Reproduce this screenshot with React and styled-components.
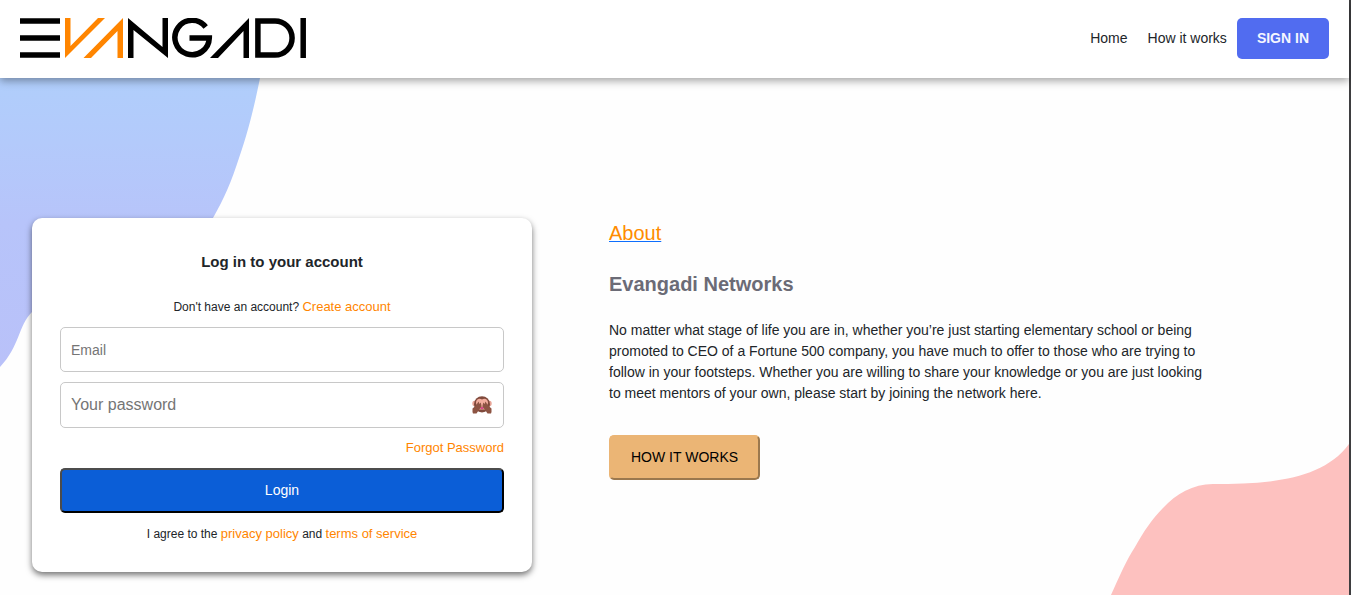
import React from "react";
import styled, { createGlobalStyle } from "styled-components";

const GlobalStyle = createGlobalStyle`
  *, *::before, *::after { box-sizing: border-box; }
  body {
    margin: 0;
    background: #fefefe;
    color: #212529;
    font-family: "Liberation Sans", Arial, sans-serif;
    font-size: 14px;
    line-height: 21px;
  }
  h1, h2, p { margin: 0; }
`;

const Page = styled.div`
  display: flex;
  flex-direction: column;
  min-height: 100vh;
  border-right: 2px solid #3e3e40;
`;

const Header = styled.header`
  display: flex;
  align-items: center;
  justify-content: space-between;
  min-height: 78px;
  padding: 0 20px 2px;
  background: #fff;
  box-shadow: 0 3px 8px rgba(0, 0, 0, 0.35);
  z-index: 1;
`;

const LogoLink = styled.a`
  display: block;
  height: 40px;
`;

const Nav = styled.nav`
  display: flex;
  align-items: center;
`;

const NavLink = styled.a`
  padding: 0 10px;
  color: #212529;
  text-decoration: none;
`;

const SignIn = styled.button`
  padding: 10px 20px;
  border: 0;
  border-radius: 5px;
  background: #516cf0;
  color: #f4f6ff;
  font: bold 14px/21px "Liberation Sans", Arial, sans-serif;
`;

const Main = styled.main`
  display: grid;
  flex: 1;
  grid-template: 1fr / 1fr;
  & > * { grid-area: 1 / 1; }
`;

const BlueShape = styled.svg`
  justify-self: start;
  align-self: start;
`;

const PinkShape = styled.svg`
  justify-self: end;
  align-self: end;
`;

const Content = styled.div`
  display: flex;
  flex-wrap: wrap;
  align-items: flex-start;
  gap: 32px 77px;
  padding: 140px 32px 23px;
  z-index: 0;
`;

const Card = styled.form`
  display: flex;
  flex-direction: column;
  flex: 0 1 500px;
  padding: 28px;
  border-radius: 10px;
  background: #fff;
  box-shadow: 0 3px 6px rgba(0, 0, 0, 0.55);
`;

const CardTitle = styled.h1`
  margin-bottom: 19px;
  font-size: 15px;
  line-height: 32px;
  text-align: center;
`;

const Note = styled.p`
  font-size: 12px;
  line-height: 20px;
  text-align: center;
`;

const OrangeLink = styled.a`
  color: #ff8500;
  font-size: 13px;
  line-height: 20px;
  text-decoration: none;
`;

const ForgotLink = styled(OrangeLink)`
  align-self: flex-end;
  margin-top: 10px;
`;

const Field = styled.div`
  display: flex;
  align-items: center;
  height: ${(p) => p.$height}px;
  margin-top: 10px;
  padding: 0 11px 0 10px;
  border: 1px solid #c8c8c8;
  border-radius: 5px;
  background: #fff;
`;

const Input = styled.input`
  flex: 1;
  min-width: 0;
  padding: 0;
  border: 0;
  outline: 0;
  background: transparent;
  font-family: inherit;
  font-size: ${(p) => p.$size}px;
  &::placeholder { color: #757575; opacity: 1; }
`;

const RevealButton = styled.button`
  display: flex;
  padding: 0;
  border: 0;
  background: none;
`;

const LoginButton = styled.button`
  height: 45px;
  margin: 10px 0 11px;
  border: 2px solid;
  border-color: #4c4c4c #000 #000 #4c4c4c;
  border-radius: 5px;
  background: #0b5ed7;
  color: #fff;
  font: 14px/21px "Liberation Sans", Arial, sans-serif;
`;

const About = styled.section`
  display: flex;
  flex-direction: column;
  align-items: flex-start;
  flex: 0 1 600px;
`;

const AboutLink = styled.a`
  color: #ff8c00;
  font-size: 20px;
  line-height: 30px;
  text-decoration: underline 1px #0d6efd;
`;

const AboutTitle = styled.h2`
  margin: 24px 0;
  color: #6b6b76;
  font-size: 20px;
  line-height: 24px;
`;

const HowButton = styled.button`
  margin-top: 31px;
  padding: 10px 20px;
  border: 2px solid;
  border-color: #ebb575 #9b784e #9b784e #ebb575;
  border-radius: 5px;
  background: #ebb575;
  color: #000;
  font: 14px/21px "Liberation Sans", Arial, sans-serif;
`;

const Logo = () => (
  <svg width="287" height="40" viewBox="0 0 287 40" role="img" aria-label="Evangadi">
    <path d="M0 2.900H40M0 20H40M0 37.100H40" stroke="#000" strokeWidth="5.500" />
    <polygon points="45,0 50.500,0 50.500,28 78,0 85,0 45,40" fill="#ff8500" />
    <polygon points="103,0 103,40 97.500,40 97.500,13 71,40 63.500,40" fill="#ff8500" />
    <polygon points="108,0 142.500,29 142.500,0 148,0 148,40 113.500,12 113.500,40 108,40" />
    <path d="M185.700 9A17.200 17.200 0 1 0 189.300 20H169.500" fill="none" stroke="#000" strokeWidth="5.500" />
    <polygon points="229,0 229,40 223.500,40 223.500,13 198,40 190,40" />
    <path d="M237.900 2.900H255A17.100 17.100 0 0 1 255 37.100H237.900Z" fill="none" stroke="#000" strokeWidth="5.500" />
    <path d="M283.200 0V40" stroke="#000" strokeWidth="5.500" />
  </svg>
);

const MonkeyIcon = () => (
  <svg width="20" height="18" viewBox="0 0 20 18" aria-hidden="true">
    <ellipse cx="2.500" cy="7.500" rx="2.200" ry="2.800" fill="#e8a597" />
    <ellipse cx="17.500" cy="7.500" rx="2.200" ry="2.800" fill="#e8a597" />
    <ellipse cx="10" cy="8.300" rx="8" ry="8.100" fill="#804a3c" />
    <path d="M4 7C4 2.500 8 2 10 3.500C12 2 16 2.500 16 7L13.500 13.500H6.500Z" fill="#f3ae9e" />
    <path d="M8.500 11H11.500V13H8.500Z" fill="#d7488b" />
    <path d="M0.500 12.500L4 9.500L6.500 5.500L7.500 8L8.800 6.500L9.600 10.500L6.500 14.500L4.500 17.500H1L0.500 16Z" fill="#8d5443" />
    <path d="M19.500 12.500L16 9.500L13.500 5.500L12.500 8L11.200 6.500L10.400 10.500L13.500 14.500L15.500 17.500H19L19.500 16Z" fill="#8d5443" />
  </svg>
);

export default function App() {
  return (
    <>
      <GlobalStyle />
      <Page>
        <Header>
          <LogoLink href="#home"><Logo /></LogoLink>
          <Nav>
            <NavLink href="#home">Home</NavLink>
            <NavLink href="#how">How it works</NavLink>
            <SignIn type="button">SIGN IN</SignIn>
          </Nav>
        </Header>
        <Main>
          <BlueShape width="260" height="289" viewBox="0 0 260 289" aria-hidden="true">
            <defs>
              <linearGradient id="sky" x1="0" y1="0" x2="0" y2="1">
                <stop offset="0" stopColor="#b0cefb" />
                <stop offset="0.22" stopColor="#b3cafb" />
                <stop offset="0.5" stopColor="#b7c4fa" />
                <stop offset="1" stopColor="#b9c1f9" />
              </linearGradient>
            </defs>
            <path
              d="M0 0H260C254 30 248 54 239 80C232 102 224 121 213 140C180 200 140 215 90 215C60 215 42 222 32 234C18 248 20 268 0 289Z"
              fill="url(#sky)"
            />
          </BlueShape>
          <PinkShape width="239" height="152" viewBox="0 0 239 152" aria-hidden="true">
            <path
              d="M1 152C10 132 17 116 25 104C34 88 42 76 53 65C66 51 83 41 103 41C156 41 212 38 239 1V152Z"
              fill="#fdc1bf"
            />
          </PinkShape>
          <Content>
            <Card onSubmit={(e) => e.preventDefault()}>
              <CardTitle>Log in to your account</CardTitle>
              <Note>
                Don't have an account? <OrangeLink href="#create">Create account</OrangeLink>
              </Note>
              <Field $height={45}>
                <Input $size={14} type="email" placeholder="Email" aria-label="Email" />
              </Field>
              <Field $height={46}>
                <Input $size={16} type="password" placeholder="Your password" aria-label="Your password" />
                <RevealButton type="button" aria-label="Show password"><MonkeyIcon /></RevealButton>
              </Field>
              <ForgotLink href="#forgot">Forgot Password</ForgotLink>
              <LoginButton type="submit">Login</LoginButton>
              <Note>
                I agree to the <OrangeLink href="#privacy">privacy policy</OrangeLink> and{" "}
                <OrangeLink href="#terms">terms of service</OrangeLink>
              </Note>
            </Card>
            <About>
              <AboutLink href="#about">About</AboutLink>
              <AboutTitle>Evangadi Networks</AboutTitle>
              <p>
                No matter what stage of life you are in, whether you’re just starting elementary
                school or being promoted to CEO of a Fortune 500 company, you have much to offer to
                those who are trying to follow in your footsteps. Whether you are willing to share
                your knowledge or you are just looking to meet mentors of your own, please start by
                joining the network here.
              </p>
              <HowButton type="button">HOW IT WORKS</HowButton>
            </About>
          </Content>
        </Main>
      </Page>
    </>
  );
}
